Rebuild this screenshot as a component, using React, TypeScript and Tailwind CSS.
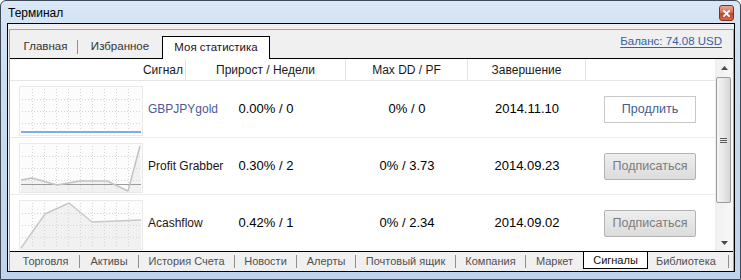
import React from "react";

type Pt = [number, number];

const BOTTOM_TABS: { label: string; w: number }[] = [
  { label: "Торговля", w: 67 },
  { label: "Активы", w: 58 },
  { label: "История Счета", w: 95 },
  { label: "Новости", w: 61 },
  { label: "Алерты", w: 58 },
  { label: "Почтовый ящик", w: 99 },
  { label: "Компания", w: 69 },
  { label: "Маркет", w: 57 },
];

function Chart({ line, base, fill, color }: { line: Pt[]; base?: number; fill?: boolean; color: string }) {
  const pts = line.map((p) => p.join(",")).join(" ");
  const area = `2,49 ${pts} 122,49`;
  return (
    <svg width="124" height="50" viewBox="0 0 124 50" className="block shrink-0">
      <rect x="0.5" y="0.5" width="123" height="49" fill="#fcfcfc" stroke="#e9e9e9" />
      {fill && <polygon points={area} fill="#f1f1f1" />}
      {[13, 25, 37, 49, 61, 73, 85, 97, 109].map((x) => (
        <line key={x} x1={x + 0.5} y1="3" x2={x + 0.5} y2="48" stroke="#d4d4d4" strokeDasharray="1 2" />
      ))}
      {[13, 25, 37].map((y) => (
        <line key={y} x1="3" y1={y + 0.5} x2="121" y2={y + 0.5} stroke="#d4d4d4" strokeDasharray="1 2" />
      ))}
      {base !== undefined && <line x1="2" y1={base + 0.5} x2="122" y2={base + 0.5} stroke="#9b9b9b" />}
      <polyline points={pts} fill="none" stroke={color} strokeWidth={fill ? 1.5 : 2} strokeLinejoin="round" />
    </svg>
  );
}

const ROWS = [
  {
    name: "GBPJPYgold",
    nameColor: "text-[#4b5b95]",
    growth: "0.00% / 0",
    dd: "0% / 0",
    date: "2014.11.10",
    action: "Продлить",
    primary: true,
    chart: <Chart line={[[2, 46], [122, 46]]} color="#79ade6" />,
  },
  {
    name: "Profit Grabber",
    nameColor: "text-[#1e1414]",
    growth: "0.30% / 2",
    dd: "0% / 3.73",
    date: "2014.09.23",
    action: "Подписаться",
    primary: false,
    chart: (
      <Chart
        fill
        base={41}
        color="#c3c3c3"
        line={[[2, 37], [13, 35], [38, 42], [61, 38], [88, 38], [109, 48], [121, 3]]}
      />
    ),
  },
  {
    name: "Acashflow",
    nameColor: "text-[#1e1414]",
    growth: "0.42% / 1",
    dd: "0% / 2.34",
    date: "2014.09.02",
    action: "Подписаться",
    primary: false,
    chart: <Chart fill color="#c8c8c8" line={[[2, 48], [26, 14], [50, 3], [73, 22], [122, 20]]} />,
  },
];

export default function App() {
  return (
    <div className="relative h-[280px] w-[741px] overflow-hidden rounded-t-[6px] border border-[#3d4957] bg-[linear-gradient(180deg,#d9e7f6_0%,#c9dcf0_30%,#bfd4ec_100%)] font-['Liberation_Sans',Arial,sans-serif] text-[#1e1e1e]">
      {/* title bar */}
      <div className="flex h-[22px] items-center pl-[7px] pt-[1px] text-[12px] text-black">Терминал</div>
      <div className="absolute right-[6px] top-[4px] flex h-[16px] w-[15px] items-center justify-center rounded-[3px] border border-[#7a3322] bg-[linear-gradient(180deg,#e9a795_0%,#d5705a_45%,#c2442b_55%,#d5664a_100%)]">
        <svg width="7" height="7" viewBox="0 0 7 7">
          <path d="M1 1L6 6M6 1L1 6" stroke="#fff" strokeWidth="1.8" strokeLinecap="square" />
        </svg>
      </div>

      {/* client */}
      <div className="ml-[6px] flex h-[249px] w-[728px] flex-col border border-black bg-[#f0f0f0] pl-[1px] pt-[5px]">
        <div className="flex flex-1 flex-col border-l border-r border-t border-[#a3a3a3]">
          {/* top tabs */}
          <div className="flex h-[29px] shrink-0 items-end border-b border-black pl-[4px] text-[11.5px]">
            <div className="flex h-[22px] w-[63px] items-center justify-center text-[#333]">Главная</div>
            <div className="mb-[4px] h-[14px] w-px bg-[#8f8f8f]" />
            <div className="flex h-[22px] w-[84px] items-center justify-center text-[#333]">Избранное</div>
            <div className="relative -mb-px flex h-[23px] w-[108px] items-center justify-center border-l border-r border-t border-black bg-white pb-[1px] text-[#2a1020]">
              Моя статистика
            </div>
            <a className="mb-[8px] ml-auto mr-[11px] text-[11.5px] text-[#3462a3] underline underline-offset-[2px]">
              Баланс: 74.08 USD
            </a>
          </div>

          {/* table + scrollbar */}
          <div className="flex h-[192px] shrink-0 bg-white">
            <div className="w-[705px] overflow-hidden">
              <div className="flex h-[22px] border-b border-[#e6e6e6] text-[12px] text-[#1a1a1a]">
                <div className="flex w-[176px] items-center justify-end border-r border-[#e3e3e3] pr-[2px]">Сигнал</div>
                <div className="flex w-[160px] items-center justify-center border-r border-[#e3e3e3]">Прирост / Недели</div>
                <div className="flex w-[122px] items-center justify-center border-r border-[#e3e3e3]">Max DD / PF</div>
                <div className="flex w-[118px] items-center justify-center border-r border-[#e3e3e3]">Завершение</div>
                <div className="flex-1" />
              </div>
              {ROWS.map((r) => (
                <div key={r.name} className="flex h-[57px] items-center border-b border-[#ececec]">
                  <div className="flex w-[176px] items-center gap-[5px] pl-[9px]">
                    <div className="mt-[4px]">{r.chart}</div>
                    <span className={`whitespace-nowrap text-[12px] ${r.nameColor}`}>{r.name}</span>
                  </div>
                  <div className="w-[160px] text-center text-[13px] text-black">{r.growth}</div>
                  <div className="w-[122px] text-center text-[13px] text-black">{r.dd}</div>
                  <div className="w-[118px] text-center text-[13px] text-black">{r.date}</div>
                  <div className="flex-1 pl-[18px]">
                    {r.primary ? (
                      <div className="flex h-[27px] w-[92px] items-center justify-center border border-[#c8c8c8] bg-white text-[12.5px] text-[#3e5d8f]">
                        {r.action}
                      </div>
                    ) : (
                      <div className="flex h-[27px] w-[92px] items-center justify-center rounded-[2px] border border-[#b3b3b3] bg-[linear-gradient(180deg,#eeeeee_0%,#dcdcdc_100%)] text-[12.5px] text-[#7c7c7c]">
                        {r.action}
                      </div>
                    )}
                  </div>
                </div>
              ))}
            </div>

            {/* scrollbar */}
            <div className="flex w-[18px] flex-col border-l border-[#ededed] bg-[linear-gradient(90deg,#f0f0f0,#f8f8f8)]">
              <div className="flex h-[17px] items-center justify-center">
                <svg width="7" height="4" viewBox="0 0 7 4">
                  <path d="M0 4L3.5 0L7 4Z" fill="#4a4a4a" />
                </svg>
              </div>
              <div className="mt-[1px] flex h-[126px] w-[15px] items-center justify-center rounded-[2px] border border-[#9c9c9c] bg-[linear-gradient(90deg,#f4f4f4_0%,#e8e8e8_50%,#d6d6d6_100%)]">
                <div className="flex flex-col gap-[1px]">
                  <div className="h-px w-[7px] bg-[#5a5a5a]" />
                  <div className="h-px w-[7px] bg-[#5a5a5a]" />
                  <div className="h-px w-[7px] bg-[#5a5a5a]" />
                </div>
              </div>
              <div className="flex-1" />
              <div className="flex h-[17px] items-center justify-center">
                <svg width="7" height="4" viewBox="0 0 7 4">
                  <path d="M0 0L3.5 4L7 0Z" fill="#4a4a4a" />
                </svg>
              </div>
            </div>
          </div>

          {/* bottom tabs */}
          <div className="flex h-[20px] shrink-0 border-t border-black pl-[2px] text-[11px] text-[#505050]">
            {BOTTOM_TABS.map((t) => (
              <React.Fragment key={t.label}>
                <div className="flex items-center justify-center" style={{ width: t.w }}>
                  {t.label}
                </div>
                <div className="mt-[3px] h-[13px] w-px bg-[#8f8f8f]" />
              </React.Fragment>
            ))}
            <div className="-ml-px flex h-[17px] w-[65px] items-center justify-center border-b border-l border-r border-black bg-white text-[#111]">
              Сигналы
            </div>
            <div className="flex w-[80px] items-center pl-[8px]">Библиотека</div>
            <div className="mt-[3px] h-[13px] w-px bg-[#8f8f8f]" />
          </div>
        </div>
      </div>
    </div>
  );
}
